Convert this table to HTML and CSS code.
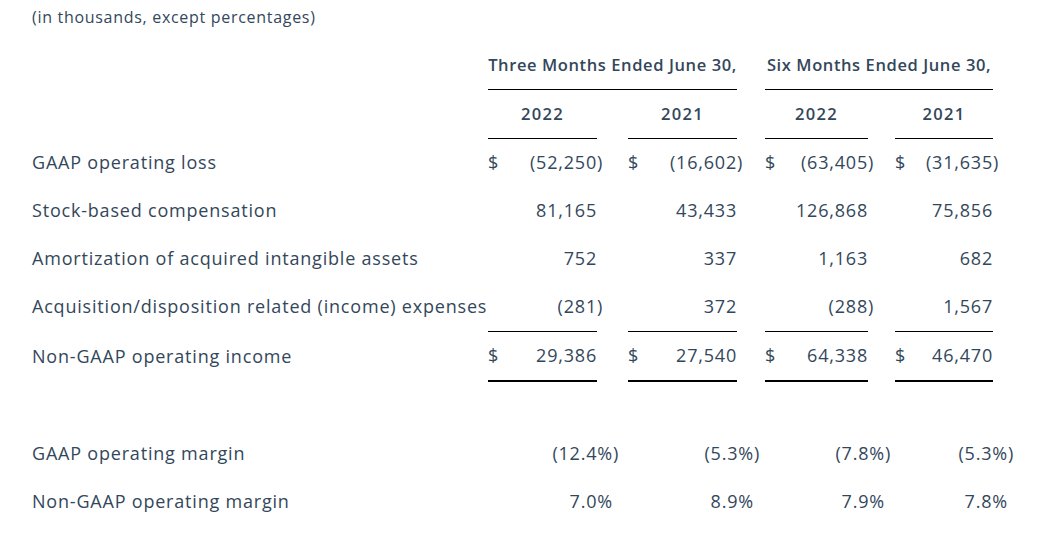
FILE: index.html
```html
<!DOCTYPE html>
<html>
<head>
<meta charset="utf-8">
<link rel="stylesheet" href="styles.css">
</head>
<body>
<div class="page">
  <div class="note">(in thousands, except percentages)</div>

  <div class="row head">
    <div class="lbl"></div>
    <div class="grp g1">Three Months Ended June 30,</div>
    <div class="grp g2">Six Months Ended June 30,</div>
  </div>

  <div class="row years">
    <div class="lbl"></div>
    <div class="v v1 yr">2022</div>
    <div class="v v2 yr">2021</div>
    <div class="v v3 yr">2022</div>
    <div class="v v4 yr">2021</div>
  </div>

  <div class="row data">
    <div class="lbl">GAAP operating loss</div>
    <div class="v v1"><span>$</span><span>(52,250</span></div><div class="p p1">)</div>
    <div class="v v2"><span>$</span><span>(16,602</span></div><div class="p p2">)</div>
    <div class="v v3"><span>$</span><span>(63,405</span></div><div class="p p3">)</div>
    <div class="v v4"><span>$</span><span>(31,635</span></div><div class="p p4">)</div>
  </div>

  <div class="row data">
    <div class="lbl">Stock-based compensation</div>
    <div class="v v1 r">81,165</div>
    <div class="v v2 r">43,433</div>
    <div class="v v3 r">126,868</div>
    <div class="v v4 r">75,856</div>
  </div>

  <div class="row data">
    <div class="lbl">Amortization of acquired intangible assets</div>
    <div class="v v1 r">752</div>
    <div class="v v2 r">337</div>
    <div class="v v3 r">1,163</div>
    <div class="v v4 r">682</div>
  </div>

  <div class="row data">
    <div class="lbl">Acquisition/disposition related (income) expenses</div>
    <div class="v v1 r">(281</div><div class="p p1">)</div>
    <div class="v v2 r">372</div>
    <div class="v v3 r">(288</div><div class="p p3">)</div>
    <div class="v v4 r">1,567</div>
  </div>

  <div class="row data total">
    <div class="lbl">Non-GAAP operating income</div>
    <div class="v v1"><span>$</span><span>29,386</span></div>
    <div class="v v2"><span>$</span><span>27,540</span></div>
    <div class="v v3"><span>$</span><span>64,338</span></div>
    <div class="v v4"><span>$</span><span>46,470</span></div>
  </div>

  <div class="margins">
    <div class="mrow">
      <div class="lbl">GAAP operating margin</div>
      <div class="m"><span>(12.4%</span><span class="hp">)</span></div>
      <div class="m"><span>(5.3%</span><span class="hp">)</span></div>
      <div class="m"><span>(7.8%</span><span class="hp">)</span></div>
      <div class="m"><span>(5.3%</span><span class="hp">)</span></div>
    </div>
    <div class="mrow">
      <div class="lbl">Non-GAAP operating margin</div>
      <div class="m"><span>7.0%</span><span class="hp"></span></div>
      <div class="m"><span>8.9%</span><span class="hp"></span></div>
      <div class="m"><span>7.9%</span><span class="hp"></span></div>
      <div class="m"><span>7.8%</span><span class="hp"></span></div>
    </div>
  </div>
</div>
</body>
</html>
```

FILE: styles.css
```css
html, body {
  margin: 0;
  padding: 0;
  background: #ffffff;
}

.page {
  padding: 7px 0 0 32px;
  font-family: "Open Sans", "Liberation Sans", sans-serif;
  color: #33475b;
  font-size: 18px;
  letter-spacing: 0.8px;
}

.note {
  font-size: 16px;
  letter-spacing: 0.7px;
  line-height: 20px;
  height: 20px;
  margin-bottom: 14px;
}

.row {
  display: grid;
  grid-template-columns: 456px 109px 7px 24px 109px 7px 21px 103px 7px 20px 98px 7px;
  height: 48px;
}

.row > div {
  display: flex;
  align-items: center;
  line-height: 22px;
}

.data > div {
  padding-bottom: 2px;
}

.lbl {
  white-space: nowrap;
  grid-column: 1;
}

.v1 { grid-column: 2; }
.p1 { grid-column: 3; }
.v2 { grid-column: 5; }
.p2 { grid-column: 6; }
.v3 { grid-column: 8; }
.p3 { grid-column: 9; }
.v4 { grid-column: 11; }
.p4 { grid-column: 12; }

.v {
  justify-content: space-between;
  white-space: nowrap;
}

.v.r {
  justify-content: flex-end;
}

.p {
  letter-spacing: 0;
}

.head {
  height: 49px;
}

.grp {
  justify-content: center;
  font-weight: 600;
  font-size: 16.5px;
  letter-spacing: 0.6px;
  border-bottom: 1px solid #000;
  white-space: nowrap;
}

.grp.g1 { grid-column: 2 / 6; }
.grp.g2 { grid-column: 8 / 12; }

.years {
  height: 49px;
}

.yr {
  justify-content: center;
  font-weight: 600;
  font-size: 16.5px;
  letter-spacing: 1.3px;
  border-bottom: 1px solid #000;
}

.total {
  height: 51px;
}

.total .v {
  border-top: 1px solid #000;
  border-bottom: 2px solid #000;
}

.margins {
  margin-top: 47px;
}

.mrow {
  display: grid;
  grid-template-columns: 456px 132px 141px 131px 123px;
  height: 48px;
}

.mrow > div {
  display: flex;
  align-items: center;
}

.m {
  justify-content: flex-end;
  white-space: nowrap;
}

.hp {
  display: inline-block;
  width: 7px;
  letter-spacing: 0;
}
```
